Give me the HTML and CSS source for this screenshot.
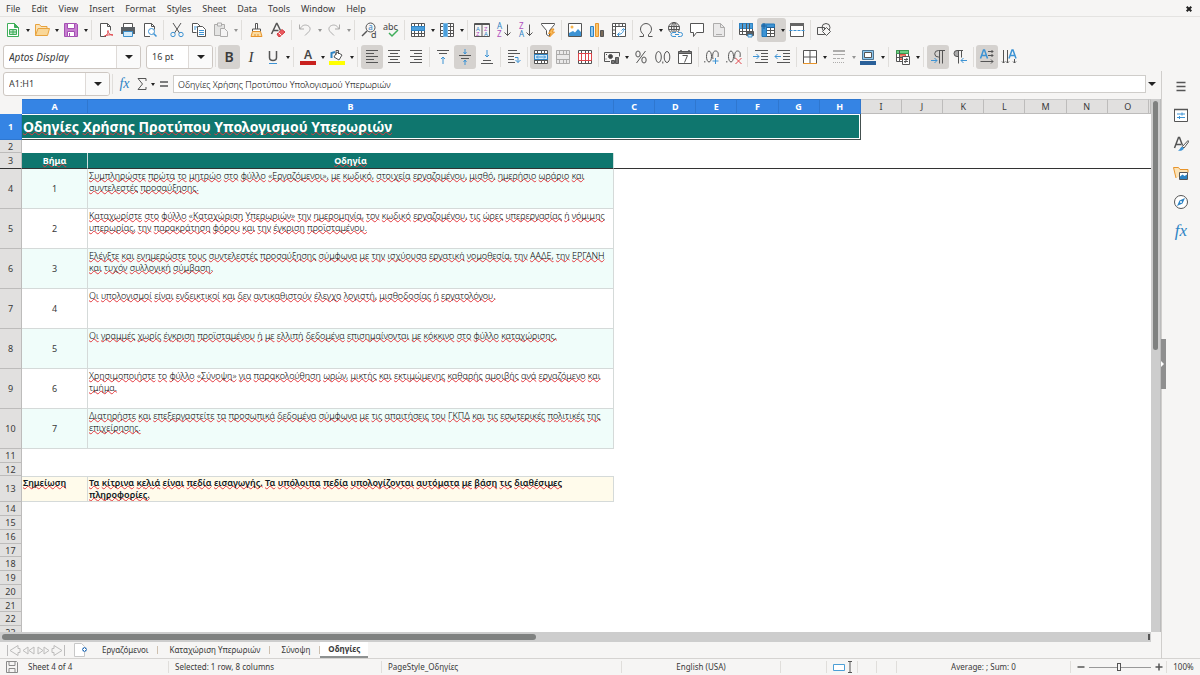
FILE: index.html
```html
<!DOCTYPE html>
<html lang="en">
<head>
<meta charset="utf-8">
<meta name="viewport" content="width=device-width, initial-scale=1">
<title>Spreadsheet</title>
<link rel="stylesheet" href="styles.css">
</head>
<body>
<div class="app">
  <nav class="menubar">
    <button>File</button><button>Edit</button><button>View</button><button>Insert</button><button>Format</button><button>Styles</button><button>Sheet</button><button>Data</button><button>Tools</button><button>Window</button><button>Help</button>
    <button class="close" aria-label="Close document"><svg viewBox="0 0 6 6"><path class="heavy" d="M.7.7l4.6 4.6M5.3.7L.7 5.3"/></svg></button>
  </nav>

  <div class="toolbar">
    <div class="split">
      <button class="tool" aria-label="New"><svg viewBox="0 0 16 16"><path class="green" d="M2.5 1.500h7l4 4v9h-11z" fill="#fff"/><path d="M9.500 1.500l4 4h-4z" fill="#3fae5a" stroke="#3fae5a"/><path class="green" d="M4.500 7.500h7v5h-7zM4.500 10h7M8 7.500v5" fill="#bfe5c8"/></svg></button>
      <button class="drop" aria-label="New options"></button>
    </div>
    <div class="split">
      <button class="tool" aria-label="Open"><svg viewBox="0 0 16 16"><path d="M1.500 13.500v-11h4l1.500 2h6v2" fill="#fbe3b8" stroke="#e8a33d"/><path d="M1.500 13.500l2.500-7h11.500l-2 7z" fill="#f9d798" stroke="#e8a33d"/></svg></button>
      <button class="drop" aria-label="Open options"></button>
    </div>
    <div class="split">
      <button class="tool" aria-label="Save"><svg viewBox="0 0 16 16"><path d="M1.500 1.500h12l1 1v12h-13z" fill="#c77fd0" stroke="#a44fb2"/><path d="M4.500 1.500h7v5h-7z" fill="#fff" stroke="#a44fb2"/><path d="M4.500 14.500v-5h7v5z" fill="#fff" stroke="#a44fb2"/><path d="M6.500 11v3" stroke="#a44fb2"/></svg></button>
      <button class="drop" aria-label="Save options"></button>
    </div>
    <span class="sep"></span>
    <button class="tool" aria-label="Export as PDF"><svg viewBox="0 0 16 16"><path d="M8 14.500H2.500v-13h7l3 3v4" fill="#fff"/><path d="M9.500 1.500v3h3"/><path class="red" d="M6.500 14c3-1 4-3 3.500-5.500-1 2 2 4.500 5 4.500-3-.5-6 0-8.500 1z"/></svg></button>
    <button class="tool" aria-label="Print"><svg viewBox="0 0 16 16"><path d="M3.500 5V1.500h9V5" fill="#fff"/><path d="M1 5h14v7H1z" fill="#5a5f63" stroke="none"/><path d="M3.500 9.500h9v5h-9z" fill="#d5ecfa" stroke="#3d8fca"/></svg></button>
    <button class="tool" aria-label="Print preview"><svg viewBox="0 0 16 16"><path d="M8 14.500H2.500v-13h7l3 3v3" fill="#fff"/><path d="M9.500 1.500v3h3"/><circle class="blue" cx="9.500" cy="9.500" r="3"/><path class="blue wide" d="M11.800 11.800l2.700 2.700"/></svg></button>
    <span class="sep"></span>
    <button class="tool" aria-label="Cut"><svg viewBox="0 0 16 16"><path d="M4 1l6.500 10M12 1L5.500 11"/><circle class="blue" cx="4" cy="12.500" r="2.200"/><circle class="blue" cx="12" cy="12.500" r="2.200"/></svg></button>
    <button class="tool" aria-label="Copy"><svg viewBox="0 0 16 16"><path d="M5.500 10.500h-4v-9h5l3 3v1" fill="#fff"/><path class="blue" d="M3 5h3M3 7h2"/><path d="M6.500 4.500h5l3 3v7h-8z" fill="#fff"/><path class="blue" d="M8 8.500h5M8 10.500h5M8 12.500h5"/></svg></button>
    <div class="split off">
      <button class="tool" aria-label="Paste"><svg viewBox="0 0 16 16"><path d="M1.500 2.500h10v11h-10z" fill="#d0d0d0"/><path d="M4.500 1h4v3h-4z" fill="#eee"/><path d="M7.500 6.500h4l3 3v5h-7z" fill="#f4f4f4"/></svg></button>
      <button class="drop" aria-label="Paste options"></button>
    </div>
    <span class="sep"></span>
    <button class="tool" aria-label="Clone formatting"><svg viewBox="0 0 16 16"><path d="M7.500 7V1.500h2V7M4.500 9.500V7h8v2.500z" fill="#fff"/><path d="M4.500 9.500h8l1.500 5H3z" fill="#fbdca2" stroke="#e8942a"/><path d="M7 14v-2M10 14v-2" stroke="#e8942a"/></svg></button>
    <button class="tool" aria-label="Clear formatting"><svg viewBox="0 0 16 16"><path class="wide" d="M1.500 12L6.500 1.500h.5l3.500 7M3.500 8.500h5"/><path d="M7 12l5-4.500 3 2.500-5 4.500H8.500z" fill="#ea5a5f" stroke="#d33a41"/><path d="M8.500 10.500l3 3" stroke="#fff"/></svg></button>
    <span class="sep"></span>
    <div class="split off">
      <button class="tool" aria-label="Undo"><svg viewBox="0 0 16 16"><path d="M2.500 2.500v4.500H7M3 7c2-4 5-4.500 7.500-3.500s3.500 3.500 1.500 6L8 13.500"/></svg></button>
      <button class="drop" aria-label="Undo list"></button>
    </div>
    <div class="split off">
      <button class="tool" aria-label="Redo"><svg viewBox="0 0 16 16"><path d="M13.500 2.500v4.500H9M13 7c-2-4-5-4.500-7.500-3.500S2 7 4 9.500L8 13.500"/></svg></button>
      <button class="drop" aria-label="Redo list"></button>
    </div>
    <span class="sep"></span>
    <button class="tool" aria-label="Find and replace"><svg viewBox="0 0 16 16"><circle cx="9.500" cy="5.500" r="4.500"/><path class="wide" d="M6 9L1 14"/><text class="glyph-blue" x="7.300" y="8" font-size="8">a</text><text class="glyph" x="10" y="15.500" font-size="9">d</text></svg></button>
    <button class="tool" aria-label="Spelling"><svg viewBox="0 0 16 16"><text class="glyph" x="0" y="7.500" font-size="9">abc</text><path d="M6 11l3 3 6-6" stroke="#3fae5a" stroke-width="1.500"/></svg></button>
    <span class="sep"></span>
    <div class="split">
      <button class="tool" aria-label="Row"><svg viewBox="0 0 16 16"><path d="M1.500 1.500h13v13h-13z" fill="#fff"/><path d="M1.500 11.500h13M4.500 1.500v13M8.500 1.500v13M11.500 1.500v13"/><path d="M1.500 4.500h13v4h-13z" fill="#4a9fdc" stroke="#2d83c4"/></svg></button>
      <button class="drop" aria-label="Row options"></button>
    </div>
    <div class="split">
      <button class="tool" aria-label="Column"><svg viewBox="0 0 16 16"><path d="M1.500 1.500h13v13h-13z" fill="#fff"/><path d="M1.500 4.500h13M1.500 8.500h13M1.500 11.500h13M11.500 1.500v13"/><path d="M4.500 1.500h4v13h-4z" fill="#4a9fdc" stroke="#7bbbe8"/></svg></button>
      <button class="drop" aria-label="Column options"></button>
    </div>
    <span class="sep"></span>
    <button class="tool" aria-label="Sort"><svg viewBox="0 0 16 16"><path d="M.5 1.500h15v13H.5zM8 2v12M.5 2.500h15"/><text class="glyph-blue" x="2" y="8.500" font-size="6">A</text><text class="glyph-purple" x="2" y="14" font-size="6">Z</text><text class="glyph-purple" x="10" y="8.500" font-size="6">Z</text><text class="glyph-blue" x="10" y="14" font-size="6">A</text></svg></button>
    <button class="tool" aria-label="Sort ascending"><svg viewBox="0 0 16 16"><text class="glyph-blue" x="1" y="7" font-size="8">A</text><text class="glyph-purple" x="1" y="15" font-size="8">Z</text><path d="M11.500 2.500v11M8.500 10.500l3 3 3-3"/></svg></button>
    <button class="tool" aria-label="Sort descending"><svg viewBox="0 0 16 16"><text class="glyph-purple" x="1" y="7" font-size="8">Z</text><text class="glyph-blue" x="1" y="15" font-size="8">A</text><path d="M11.500 2.500v11M8.500 10.500l3 3 3-3"/></svg></button>
    <button class="tool" aria-label="AutoFilter"><svg viewBox="0 0 16 16"><path d="M1.500 1.500h13v1l-5 6v6l-3-2v-4l-5-6z" fill="#fff"/><path d="M11.500 7l-3 4.500H11L9.500 15l5-5H12l2-3z" fill="#f9bd5c" stroke="#e8942a"/></svg></button>
    <span class="sep"></span>
    <button class="tool" aria-label="Insert image"><svg viewBox="0 0 16 16"><path d="M1.500 1.500h13v13h-13z" fill="#fff"/><path d="M2 14v-3l4-2 2 1.500 3-3.500 3 3V14z" fill="#3d93d4" stroke="none"/><circle cx="5" cy="5" r="1.500" fill="#f7b44c" stroke="none"/></svg></button>
    <button class="tool" aria-label="Insert chart"><svg viewBox="0 0 16 16"><path d="M1.500 4.500h3v10h-3z" fill="#8fc8f0" stroke="#2d83c4"/><path d="M6.500 1.500h3v13h-3z" fill="#f9c56c" stroke="#e8942a"/><path d="M11.500 8.500h3v6h-3z" fill="#7a6a58"/></svg></button>
    <button class="tool" aria-label="Pivot table"><svg viewBox="0 0 16 16"><path d="M1.500 1.500h13v13h-13z" fill="#fff"/><path d="M1.500 4.500h13M4.500 1.500v13M8 1.500v3M11.500 1.500v3M1.500 8h3M1.500 11.500h3"/><path class="blue" d="M6.500 12.500c4 0 6-2 6-5M10.500 8.500l2-2 2 2M8.500 10.500l-2 2 2 2"/></svg></button>
    <span class="sep"></span>
    <div class="split">
      <button class="tool" aria-label="Special character"><svg viewBox="0 0 16 16"><path d="M1.500 14.500h4v-2C3.500 11 2.500 9 2.500 7c0-3 2.500-5.500 5.500-5.500s5.500 2.500 5.500 5.500c0 2-1 4-3 5.500v2h4"/></svg></button>
      <button class="drop" aria-label="Special character options"></button>
    </div>
    <button class="tool" aria-label="Hyperlink"><svg viewBox="0 0 16 16"><circle cx="7" cy="6" r="5.500"/><ellipse cx="7" cy="6" rx="2.500" ry="5.500"/><path d="M1.500 4.500h11M1.500 7.500h11M7 .5v10"/><path d="M4 10h12v5H4z" fill="#f6f5f4" stroke="none"/><path class="blue" d="M9 10.500H6a2 2 0 0 0 0 4H9M11 10.500h2.500a2 2 0 0 1 0 4H11M8 12.500h4"/></svg></button>
    <button class="tool" aria-label="Comment"><svg viewBox="0 0 16 16"><path d="M1.500 1.500h13v9h-7l-3 4v-4h-3z" fill="#fff"/></svg></button>
    <button class="tool off" aria-label="Headers and footers"><svg viewBox="0 0 16 16"><path d="M2.500 1.500h7l4 4v9h-11z" fill="#dcdcdc"/><path d="M9.500 1.500v4h4M5 12.500h6"/></svg></button>
    <span class="sep"></span>
    <button class="tool" aria-label="Define print area"><svg viewBox="0 0 16 16"><path d="M1.500 1.500h13v11h-13z" fill="#fff"/><path d="M1.500 1.500h13v5h-13z" fill="#4a9fdc" stroke="#2d83c4"/><path d="M1.500 9.500h13M4.500 1.500v11M8.500 1.500v11M11.500 1.500v8"/><path d="M8.500 9.500h7v4h-7z" fill="#5a5f63"/><path d="M10 12.500h4v2.500h-4z" fill="#d5ecfa" stroke="#3d8fca"/></svg></button>
    <div class="split on">
      <button class="tool" aria-label="Freeze rows and columns" aria-pressed="true"><svg viewBox="0 0 16 16"><path d="M2.500 2.500h12v12h-12z" fill="#fff"/><path d="M6.500 8.500h8M6.500 11.500h8M10.500 6v8.500"/><path d="M2 2h12.500v3.500h-8v9H2z" fill="#3d93d4" stroke="#1f76b8"/><path d="M4 1v6M1 4h6M6.500 5.500h8" stroke="#1f5f98"/></svg></button>
      <button class="drop" aria-label="Freeze options"></button>
    </div>
    <button class="tool" aria-label="Split window"><svg viewBox="0 0 16 16"><path d="M1.500 1.500h13v13h-13z" fill="#fff"/><path d="M1 1h14v3H1z" fill="#666" stroke="none"/><path class="blue" d="M.5 8.500h15" stroke-dasharray="3 1"/></svg></button>
    <span class="sep"></span>
    <button class="tool" aria-label="Show draw functions"><svg viewBox="0 0 16 16"><path d="M1.500 5.500h7v7h-7z"/><circle cx="10" cy="5.500" r="4"/><path d="M10.500 5.500l4 4-4 4-4-4z" fill="#f6f5f4"/></svg></button>
  </div>

  <div class="toolbar second">
    <div class="combo font-name"><input type="text" value="Aptos Display" aria-label="Font name"><button aria-label="Font list"></button></div>
    <div class="combo font-size"><input type="text" value="16 pt" aria-label="Font size"><button aria-label="Size list"></button></div>
    <span class="sep"></span>
    <button class="tool on letter bold" aria-label="Bold" aria-pressed="true">B</button>
    <button class="tool letter italic" aria-label="Italic">I</button>
    <div class="split">
      <button class="tool letter" aria-label="Underline"><svg viewBox="0 0 16 16"><path class="wide" d="M4.500 2v6.500c0 2 1 3 3.500 3s3.500-1 3.500-3V2"/><path class="blue" d="M4 14.500h8"/></svg></button>
      <button class="drop" aria-label="Underline options"></button>
    </div>
    <span class="sep"></span>
    <div class="split">
      <button class="tool" aria-label="Font color"><svg viewBox="0 0 16 16"><text class="glyph strong" x="4" y="10" font-size="12">A</text><path d="M0 12h16v4H0z" fill="#c9211e" stroke="none"/></svg></button>
      <button class="drop" aria-label="Font color options"></button>
    </div>
    <div class="split">
      <button class="tool" aria-label="Background color"><svg viewBox="0 0 16 16"><path d="M8 3l5 3-3 5-5-3zM7 6V1.500h2.500V5" fill="#fff"/><path d="M2.500 9V4l3.500-1" stroke="#2d83c4" stroke-width="2"/><path d="M0 12h16v4H0z" fill="#ffff00" stroke="none"/></svg></button>
      <button class="drop" aria-label="Background color options"></button>
    </div>
    <span class="sep"></span>
    <button class="tool on" aria-label="Align left" aria-pressed="true"><svg viewBox="0 0 16 16"><path d="M2 1.500h12M2 4.500h8M2 7.500h12M2 10.500h8M2 13.500h12"/></svg></button>
    <button class="tool" aria-label="Align center"><svg viewBox="0 0 16 16"><path d="M2 1.500h12M4 4.500h8M2 7.500h12M4 10.500h8M2 13.500h12"/></svg></button>
    <button class="tool" aria-label="Align right"><svg viewBox="0 0 16 16"><path d="M2 1.500h12M6 4.500h8M2 7.500h12M6 10.500h8M2 13.500h12"/></svg></button>
    <span class="sep"></span>
    <button class="tool" aria-label="Align top"><svg viewBox="0 0 16 16"><path d="M2 1.500h12M4 4.500h8"/><path class="blue" d="M8 15V8M6 10l2-2 2 2"/></svg></button>
    <button class="tool on" aria-label="Center vertically" aria-pressed="true"><svg viewBox="0 0 16 16"><path d="M2 6.500h12M4 9.500h8"/><path class="blue" d="M8 0v5M6.500 3L8 5l1.500-2M8 16v-5M6.500 13L8 11l1.500 2"/></svg></button>
    <button class="tool" aria-label="Align bottom"><svg viewBox="0 0 16 16"><path d="M4 11.500h8M2 14.500h12"/><path class="blue" d="M8 1v7M6 6l2 2 2-2"/></svg></button>
    <span class="sep"></span>
    <button class="tool" aria-label="Wrap text"><svg viewBox="0 0 16 16"><path d="M2 1.500h9M2 4.500h12M2 7.500h6M2 10.500h6M2 13.500h7"/><path class="blue" d="M9 8.500h3v5M9.500 11l2.500 2.500 2.500-2.500"/></svg></button>
    <span class="sep"></span>
    <button class="tool on" aria-label="Merge and center" aria-pressed="true"><svg viewBox="0 0 16 16"><path d="M1.500 1.500h13v13h-13z" fill="#fff"/><path d="M1.500 4.500h13M1.500 11.500h13M4.500 1.500v3M8.500 1.500v3M11.500 1.500v3M4.500 11.500v3M8.500 11.500v3M11.500 11.500v3"/><path d="M1.500 5.500h13v5h-13z" fill="#cfe8fa" stroke="#2d83c4"/><path class="blue" d="M3.500 8h9M5 6.500L3.500 8 5 9.500M11 6.500L12.500 8 11 9.500"/></svg></button>
    <button class="tool off" aria-label="Merge cells"><svg viewBox="0 0 16 16"><path d="M1.500 1.500h13v13h-13z" fill="#dcdcdc"/><path d="M1.500 5.500h13M1.500 10.500h13M4.500 1.500v4M8.500 1.500v4M11.500 1.500v4M4.500 10.500v4M8.500 10.500v4M11.500 10.500v4"/></svg></button>
    <button class="tool" aria-label="Unmerge cells"><svg viewBox="0 0 16 16"><path d="M1.500 1.500h13v13h-13z" fill="#fff"/><path d="M4.500 1.500v3M8.500 1.500v3M11.500 1.500v3M4.500 12v3M8.500 12v3M11.500 12v3"/><path class="red" d="M1.500 4.500h13v7h-13zM4.500 4.500v7M8.500 4.500v7M11.500 4.500v7"/></svg></button>
    <span class="sep"></span>
    <div class="split">
      <button class="tool" aria-label="Currency format"><svg viewBox="0 0 16 16"><path d="M6 12.500H.5v-9h15v4"/><circle cx="6.500" cy="7.500" r="2" fill="#444"/><path d="M7.500 11.500h3v3h-3zM11.500 8.500h3v6h-3zM2 9.500v1M2 5.500h1" fill="#777"/></svg></button>
      <button class="drop" aria-label="Currency options"></button>
    </div>
    <button class="tool" aria-label="Percent format"><svg viewBox="0 0 16 16"><path d="M12.500 2l-9 12"/><ellipse cx="5" cy="5" rx="2.200" ry="3"/><ellipse cx="11" cy="11" rx="2.200" ry="3"/></svg></button>
    <button class="tool" aria-label="Number format"><svg viewBox="0 0 16 16"><ellipse cx="3.500" cy="8" rx="2.800" ry="5.500"/><ellipse cx="12" cy="8" rx="2.800" ry="5.500"/><path d="M7.800 12.500v2"/></svg></button>
    <button class="tool" aria-label="Date format"><svg viewBox="0 0 16 16"><path d="M1.500 2.500h13v12h-13zM1.500 4.500h13" fill="#fff"/><path class="wide" d="M4 1v2M12 1v2M1.500 3h13"/><path d="M5.500 6.500h5l-3 7"/></svg></button>
    <span class="sep"></span>
    <button class="tool" aria-label="Add decimal place"><svg viewBox="0 0 16 16"><path d="M.8 12v1.500"/><ellipse cx="5" cy="7.500" rx="2.500" ry="5.500"/><path d="M9 10c-.7-3-.5-8 2.500-8S14.500 5 14 8"/><path class="blue" d="M11.500 9v6M8.500 12h6"/></svg></button>
    <button class="tool" aria-label="Delete decimal place"><svg viewBox="0 0 16 16"><path d="M.8 12v1.500"/><ellipse cx="5" cy="7.500" rx="2.500" ry="5.500"/><path d="M9 10c-.7-3-.5-8 2.500-8S14.500 5 14 8"/><path class="red" d="M9.500 9l6 6M15.500 9l-6 6"/></svg></button>
    <span class="sep"></span>
    <button class="tool" aria-label="Increase indent"><svg viewBox="0 0 16 16"><path d="M2 1.500h13M8 4.500h7M8 7.500h7M8 10.500h7M2 13.500h13"/><path class="blue" d="M0 7.500h6M3.500 5L6 7.500 3.500 10"/></svg></button>
    <button class="tool" aria-label="Decrease indent"><svg viewBox="0 0 16 16"><path d="M2 1.500h13M8 4.500h7M8 7.500h7M8 10.500h7M2 13.500h13"/><path class="blue" d="M6 7.500H0M2.500 5L0 7.500 2.500 10"/></svg></button>
    <span class="sep"></span>
    <div class="split">
      <button class="tool" aria-label="Borders"><svg viewBox="0 0 16 16"><path d="M1.500 1.500h13v13h-13zM8 1.500v13M1.500 8h13" fill="#fff"/><path d="M1 14.500h14" stroke="#e8942a"/></svg></button>
      <button class="drop" aria-label="Border options"></button>
    </div>
    <div class="split off">
      <button class="tool" aria-label="Border style"><svg viewBox="0 0 16 16"><path d="M2 1.500h12M2 2.500h12M2 5.500h12"/><path d="M2 9.500h12" stroke-dasharray="3 1"/><path d="M2 13.500h12" stroke-dasharray="1 1"/></svg></button>
      <button class="drop" aria-label="Border style options"></button>
    </div>
    <div class="split">
      <button class="tool" aria-label="Border color"><svg viewBox="0 0 16 16"><path d="M2.500 1.500h11v9h-11z" fill="#8cc7ef" stroke="#4c7390"/><path d="M4.500 3.500h7v5h-7z" fill="#fff" stroke="#555"/><path d="M0 12h16v4H0z" fill="#2a6099" stroke="none"/></svg></button>
      <button class="drop" aria-label="Border color options"></button>
    </div>
    <span class="sep"></span>
    <div class="split">
      <button class="tool" aria-label="Conditional formatting"><svg viewBox="0 0 16 16"><path d="M1.500 1.500h12v11h-12z" fill="#fff"/><path d="M1.500 1.500h12v3h-12z" fill="#6fcf84" stroke="#3a9a50"/><path d="M4.500 5.500h6v5h-6z" fill="#f0866f" stroke="#d9534a"/><path d="M4.500 1.500v11M1.500 8.500h12"/><path d="M7.500 7.500h7v8h-7z" fill="#fff"/><path d="M9 10.500h4M9 12.500h4M12 9l-2 5"/></svg></button>
      <button class="drop" aria-label="Conditional options"></button>
    </div>
    <span class="sep"></span>
    <button class="tool on" aria-label="Left to right" aria-pressed="true"><svg viewBox="0 0 16 16"><path d="M15 1.500H8.500a3.500 3 0 0 0 0 6.500h1M9.500 1.500v13M12.500 1.500v13"/><path class="blue" d="M1 11.500h6M4.500 9L7 11.500 4.500 14"/></svg></button>
    <button class="tool" aria-label="Right to left"><svg viewBox="0 0 16 16"><path d="M11 1.500H5a3 3 0 0 0 0 6h1.500v-6" fill="#aaa"/><path d="M6.500 1.500v13M9.500 1.500v7"/><path class="blue" d="M15 11.500H9M11.500 9L9 11.500l2.500 2.500"/></svg></button>
    <span class="sep"></span>
    <button class="tool on" aria-label="Text direction left to right" aria-pressed="true"><svg viewBox="0 0 16 16"><path class="blue wide" d="M1.500 9.500l3-8.500h1l3 8.500M3 6.500h4"/><path d="M9 2.500h5M9 6.500h5M1.500 12.500H14M12.500 1l1.500 1.500L12.500 4M12.500 5l1.500 1.500L12.500 8M12 10.500l2 2-2 2"/></svg></button>
    <button class="tool" aria-label="Text direction top to bottom"><svg viewBox="0 0 16 16"><path class="blue wide" d="M8 9.500L11 1h1l3 8.500M9.500 6.500h4"/><path d="M2.500 1v13M6.500 1v13M13.500 10v4M1 12.500L2.500 14 4 12.500M5 12.500L6.500 14 8 12.500M12 12.500l1.500 1.500 1.500-1.500"/></svg></button>
  </div>

  <div class="workspace">
    <main class="document">
      <div class="formula-bar">
        <div class="combo name-box"><input type="text" value="A1:H1" aria-label="Name box"><button aria-label="Named ranges"></button></div>
        <span class="sep"></span>
        <button class="fx" aria-label="Function wizard">fx</button>
        <button class="mini" aria-label="Sum"><svg viewBox="0 0 12 16"><path d="M10 5V2.500H2L6.500 8 2 13.500h8V11"/></svg></button>
        <button class="drop" aria-label="Sum options"></button>
        <button class="mini" aria-label="Formula"><svg viewBox="0 0 12 16"><path class="wide" d="M2 6h8M2 10h8"/></svg></button>
        <input class="formula" type="text" value="Οδηγίες Χρήσης Προτύπου Υπολογισμού Υπερωριών" aria-label="Input line">
        <button class="expand" aria-label="Expand formula bar"></button>
      </div>

      <div class="grid-area">
        <div class="viewport">
          <table class="sheet">
            <colgroup><col class="c-head"><col class="c-a"><col class="c-b"><col><col><col><col><col><col><col><col><col><col><col><col><col><col class="c-rest"></colgroup>
            <thead>
              <tr><th class="corner"></th><th class="sel">A</th><th class="sel">B</th><th class="sel">C</th><th class="sel">D</th><th class="sel">E</th><th class="sel">F</th><th class="sel">G</th><th class="sel">H</th><th>I</th><th>J</th><th>K</th><th>L</th><th>M</th><th>N</th><th>O</th><th></th></tr>
            </thead>
            <tbody>
              <tr class="title-row"><th class="sel">1</th><td colspan="8" class="title"><span class="spell">Οδηγίες Χρήσης Προτύπου Υπολογισμού Υπερωριών</span></td></tr>
              <tr class="low"><th>2</th></tr>
              <tr class="head-row"><th>3</th><td class="head"><span class="spell">Βήμα</span></td><td class="head"><span class="spell">Οδηγία</span></td><td colspan="14"></td></tr>
              <tr class="step tint"><th>4</th><td class="num">1</td><td class="text"><span class="spell">Συμπληρώστε πρώτα το μητρώο στο φύλλο «Εργαζόμενοι», με κωδικό, στοιχεία εργαζομένου, μισθό, ημερήσιο ωράριο και<br>συντελεστές προσαύξησης.</span></td></tr>
              <tr class="step"><th>5</th><td class="num">2</td><td class="text"><span class="spell">Καταχωρίστε στο φύλλο «Καταχώριση Υπερωριών» την ημερομηνία, τον κωδικό εργαζομένου, τις ώρες υπερεργασίας ή νόμιμης<br>υπερωρίας, την παρακράτηση φόρου και την έγκριση προϊσταμένου.</span></td></tr>
              <tr class="step tint"><th>6</th><td class="num">3</td><td class="text"><span class="spell">Ελέγξτε και ενημερώστε τους συντελεστές προσαύξησης σύμφωνα με την ισχύουσα εργατική νομοθεσία, την ΑΑΔΕ, την ΕΡΓΑΝΗ<br>και τυχόν συλλογική σύμβαση.</span></td></tr>
              <tr class="step"><th>7</th><td class="num">4</td><td class="text"><span class="spell">Οι υπολογισμοί είναι ενδεικτικοί και δεν αντικαθιστούν έλεγχο λογιστή, μισθοδοσίας ή εργατολόγου.</span></td></tr>
              <tr class="step tint"><th>8</th><td class="num">5</td><td class="text"><span class="spell">Οι γραμμές χωρίς έγκριση προϊσταμένου ή με ελλιπή δεδομένα επισημαίνονται με κόκκινο στο φύλλο καταχώρισης.</span></td></tr>
              <tr class="step"><th>9</th><td class="num">6</td><td class="text"><span class="spell">Χρησιμοποιήστε το φύλλο «Σύνοψη» για παρακολούθηση ωρών, μικτής και εκτιμώμενης καθαρής αμοιβής ανά εργαζόμενο και<br>τμήμα.</span></td></tr>
              <tr class="step tint"><th>10</th><td class="num">7</td><td class="text"><span class="spell">Διατηρήστε και επεξεργαστείτε τα προσωπικά δεδομένα σύμφωνα με τις απαιτήσεις του ΓΚΠΔ και τις εσωτερικές πολιτικές της<br>επιχείρησης.</span></td></tr>
              <tr><th>11</th></tr>
              <tr class="low"><th>12</th></tr>
              <tr class="note"><th>13</th><td><span class="spell">Σημείωση</span></td><td><span class="spell">Τα κίτρινα κελιά είναι πεδία εισαγωγής. Τα υπόλοιπα πεδία υπολογίζονται αυτόματα με βάση τις διαθέσιμες<br>πληροφορίες.</span></td></tr>
              <tr><th>14</th></tr>
              <tr><th>15</th></tr>
              <tr><th>16</th></tr>
              <tr class="low"><th>17</th></tr>
              <tr><th>18</th></tr>
              <tr><th>19</th></tr>
              <tr><th>20</th></tr>
              <tr class="low"><th>21</th></tr>
              <tr><th>22</th></tr>
              <tr><th>23</th></tr>
            </tbody>
          </table>
        </div>
        <div class="vscroll"><div class="thumb"></div></div>
      </div>

      <div class="hscroll"><div class="thumb"></div><div class="grip"></div></div>

      <div class="tabs">
        <div class="tab-nav">
          <button aria-label="First sheet"><svg viewBox="0 0 15 13"><path d="M1.500 1v11M12 1.500L4 6.500l8 5V8.500h2v-4h-2z"/></svg></button>
          <button aria-label="Previous sheet"><svg viewBox="0 0 15 13"><path d="M7 3L2 6.500 7 10zM13 3L8 6.500l5 3.500z"/></svg></button>
          <button aria-label="Next sheet"><svg viewBox="0 0 15 13"><path d="M2 3l5 3.500L2 10zM8 3l5 3.500L8 10z"/></svg></button>
          <button aria-label="Last sheet"><svg viewBox="0 0 15 13"><path d="M13.500 1v11M3 1.500l8 5-8 5V8.500H1v-4h2z"/></svg></button>
        </div>
        <button class="add-sheet" aria-label="Add sheet"><svg viewBox="0 0 14 14"><path d="M.5.5h7l3 3v10H.5z" fill="#fff" stroke="#c8c8c8"/><circle cx="10.500" cy="6.500" r="2.300" fill="#2a6fb8" stroke="none"/><path d="M9 6.500h3M10.500 5v3" stroke="#fff"/></svg></button>
        <button class="tab">Εργαζόμενοι</button>
        <button class="tab">Καταχώριση Υπερωριών</button>
        <button class="tab">Σύνοψη</button>
        <button class="tab current">Οδηγίες</button>
      </div>
    </main>

    <aside class="sidebar">
      <button class="handle" aria-label="Hide sidebar"></button>
      <button class="tool" aria-label="Sidebar settings"><svg viewBox="0 0 16 16"><path class="wide" d="M3.500 4.500h9M3.500 8.500h9M3.500 12.500h9"/></svg></button>
      <button class="tool" aria-label="Properties"><svg viewBox="0 0 16 16"><path d="M1.500 2.500h13v12h-13z" fill="#fff"/><path class="wide" d="M1 2.500h14"/><path class="blue" d="M4 7h8M4 10.500h8M9 5.500v3M6.500 9v3"/></svg></button>
      <button class="tool" aria-label="Styles"><svg viewBox="0 0 16 16"><path class="wide" d="M1.500 12L5.500 1.500h1l3 8M3 8.500h5"/><path d="M15 4.500l-5.500 6 1.500 1.500L15.500 6z" fill="#fff"/><path d="M9 10.500l2 2c-1.500 2.500-4 2.500-6 2 2-.5 2-3 4-4z" fill="#3d93d4" stroke="none"/></svg></button>
      <button class="tool" aria-label="Gallery"><svg viewBox="0 0 16 16"><path d="M3 13L.5 2.500h5l1.500 2h8v3" fill="#fbe3b8" stroke="#e8942a"/><path d="M6.500 7.500h8v7h-8z" fill="#fff"/><path d="M7 14v-2.500l2.500-2 2 1.500 2.500-1.500V14z" fill="#2d83c4" stroke="none"/></svg></button>
      <button class="tool" aria-label="Navigator"><svg viewBox="0 0 16 16"><circle cx="8" cy="8" r="6.500" fill="#fff"/><path d="M12 4l-2.500 5.500L4 12l2.500-5.500z" fill="#2d83c4" stroke="none"/><circle cx="8" cy="8" r="1" fill="#fff" stroke="none"/></svg></button>
      <button class="tool fx-large" aria-label="Functions">fx</button>
    </aside>
  </div>

  <footer class="statusbar">
    <span class="icon-cell"><svg viewBox="0 0 12 12"><path d="M.5.5h10l1 1v10H.5zM3 .5v4h6v-4M3 11.500v-4h6v4" stroke="#8a8a8a"/></svg></span>
    <span>Sheet 4 of 4</span>
    <span>Selected: 1 row, 8 columns</span>
    <span>PageStyle_Οδηγίες</span>
    <span class="mid">English (USA)</span>
    <span></span>
    <span class="mode"><svg viewBox="0 0 20 12"><path d="M.5 3.500h11v6H.5z" stroke="#4c9fd6" fill="#fff"/><path d="M15 .5h4M15 11.500h4M17 .5v11"/></svg></span>
    <span></span>
    <span></span>
    <span class="mid">Average: ; Sum: 0</span>
    <span class="zoom"><button aria-label="Zoom out"><svg viewBox="0 0 8 8"><path class="wide" d="M.5 4h7"/></svg></button><input type="range" min="0" max="100" value="48" aria-label="Zoom"><button aria-label="Zoom in"><svg viewBox="0 0 8 8"><path class="wide" d="M.5 4h7M4 .5v7"/></svg></button></span>
    <span class="mid">100%</span>
  </footer>
</div>
<script src="spelling.js"></script>
</body>
</html>
```

FILE: spelling.js
```js
// Marks each word of a cell on its own, so the wavy line stops at spaces.
document.querySelectorAll(".spell").forEach(function (cell) {
  Array.from(cell.childNodes).forEach(function (node) {
    if (node.nodeType !== Node.TEXT_NODE) return;
    var parts = document.createDocumentFragment();
    node.textContent.split(/(\s+)/).forEach(function (piece) {
      if (piece.trim() === "") {
        parts.appendChild(document.createTextNode(piece));
        return;
      }
      var word = document.createElement("span");
      word.className = "word";
      word.textContent = piece;
      parts.appendChild(word);
    });
    cell.replaceChild(parts, node);
  });
});
```

FILE: styles.css
```css
* { box-sizing: border-box; }

body {
  margin: 0;
  background: #f6f5f4;
  color: #3a3a3a;
  font: 9px/12px "Noto Sans", "Open Sans", sans-serif;
}

button, input {
  margin: 0;
  padding: 0;
  border: 0;
  background: none;
  color: inherit;
  font: inherit;
}

svg {
  display: block;
  fill: none;
  stroke: #555;
  stroke-width: 1;
  overflow: visible;
}
svg .blue { stroke: #3d93d4; }
svg .red { stroke: #e0444a; }
svg .green { stroke: #3fae5a; }
svg .wide { stroke-width: 1.5; }
svg .heavy { stroke: #222; stroke-width: 2; }
svg text { stroke: none; font-family: "Noto Sans", sans-serif; }
svg .glyph { fill: #444; }
svg .glyph-blue { fill: #2d83c4; }
svg .glyph-purple { fill: #b04fbd; }
svg .strong { font-weight: 600; }

.app {
  display: flex;
  flex-direction: column;
  height: 100vh;
  overflow: hidden;
}

/* Menu bar */
.menubar {
  display: flex;
  align-items: center;
  gap: 11px;
  height: 17px;
  padding: 1px 8px 0 6px;
  border-bottom: 1px solid #e4e3e1;
}
.menubar .close { margin-left: auto; }
.close svg { width: 6px; height: 6px; }

/* Toolbars */
.toolbar {
  display: flex;
  align-items: center;
  height: 26px;
  padding-left: 2px;
}
.toolbar.second { height: 28px; }
.tool {
  display: flex;
  align-items: center;
  justify-content: center;
  flex: none;
  width: 22px;
  height: 24px;
  border-radius: 3px;
}
.tool svg { width: 16px; height: 16px; }
.split { display: flex; flex: none; border-radius: 3px; }
.split + .sep { margin-right: 3px; }
.on { background: #d5d2cf; }
.off { opacity: 0.45; }
.drop {
  display: flex;
  align-items: center;
  justify-content: center;
  flex: none;
  width: 7px;
  height: 24px;
}
.drop::before, .expand::before, .combo button::before {
  content: "";
  border: 3px solid transparent;
  border-top-color: #222;
  border-bottom: 0;
}
.drop::before { border-width: 3px 2px 0; }
.sep {
  flex: none;
  width: 1px;
  height: 20px;
  margin: 0 2px;
  background: #e0dedb;
}
.letter { font-size: 14px; }
.bold { font-weight: 600; }
.italic { font-family: "Liberation Serif", serif; font-style: italic; font-size: 15px; }

.combo {
  display: flex;
  flex: none;
  height: 24px;
  border: 1px solid #cdc7c2;
  border-radius: 3px;
  background: #fff;
  overflow: hidden;
}
.combo input { flex: 1; min-width: 0; padding-left: 5px; }
.combo button {
  display: flex;
  align-items: center;
  justify-content: center;
  width: 24px;
  border-left: 1px solid #dedad7;
  background: #fafafa;
}
.combo button::before { border-width: 4px 4px 0; }
.font-name { width: 138px; margin: 0 5px 0 1px; font-size: 10px; font-style: italic; }
.font-size { width: 67px; }
.name-box { width: 107px; }

/* Formula bar */
.workspace { display: flex; flex: 1; min-height: 0; }
.document { display: flex; flex-direction: column; flex: 1; min-width: 0; }
.formula-bar {
  display: flex;
  align-items: center;
  height: 28px;
  padding: 0 3px 2px;
}
.fx {
  width: 19px;
  color: #2d83c4;
  font: italic 14px/20px "Liberation Serif", serif;
}
.mini svg { width: 12px; height: 16px; }
.mini { width: 15px; padding-left: 2px; }
.formula {
  flex: 1;
  min-width: 0;
  height: 18px;
  margin-left: 2px;
  padding-left: 4px;
  border: 1px solid #cfcdca;
  background: #fff;
  color: #000;
  font-weight: 300;
}
.expand { display: flex; justify-content: center; width: 12px; }
.expand::before { border-width: 4px 4px 0; }

/* Sheet */
.grid-area { display: flex; flex: 1; min-height: 0; }
.viewport {
  flex: 1;
  min-width: 0;
  overflow: hidden;
  background: #fff;
}
.sheet {
  width: 100%;
  table-layout: fixed;
  border-spacing: 0;
}
.c-head { width: 22px; }
.c-a { width: 66px; }
.c-b { width: 526px; }
.c-rest { width: 2px; }
.sheet th, .sheet td { padding: 0; overflow: hidden; white-space: nowrap; }
.sheet th {
  border-right: 1px solid #bdbcbb;
  border-bottom: 1px solid #bdbcbb;
  background: #e1e0df;
  font-weight: 400;
  line-height: 11px;
}
.sheet thead th { height: 15px; border-top: 1px solid #c9c9c9; }
.sheet thead .corner { background: #f6f5f4; border-color: #f6f5f4; }
.sheet tbody tr { height: 14px; }
.sheet tbody .low { height: 13px; }
.sheet th.sel {
  border-color: #2f77cf;
  background: #3584e4;
  color: #fff;
  font-weight: 700;
}
.sheet .title-row { height: 26px; }
.sheet .title {
  padding-left: 1px;
  border: solid #44504f;
  border-width: 0 1px 1px 0;
  box-shadow: inset 0 1px #fff, inset -1px -1px #fff;
  background: #0f766e;
  color: #fff;
  font-size: 14px;
  font-weight: 700;
  line-height: 20px;
}
.sheet .head-row { height: 16px; }
.sheet .head-row > * { border-bottom: 1px solid #333; }
.sheet .head {
  border-right: 1px solid #cfe0de;
  background: #0f766e;
  color: #fff;
  font-weight: 700;
  text-align: center;
  line-height: 13px;
}
.sheet .step { height: 40px; }
.step td, .note td {
  border-right: 1px solid #d5dad9;
  border-bottom: 1px solid #d5dad9;
}
.tint td { background: #f0fdfa; }
.num { text-align: center; }
.sheet .text {
  padding: 1px 0 0 1px;
  color: #000;
  font-weight: 300;
  vertical-align: top;
}
.sheet .note { height: 26px; }
.sheet .note td {
  padding-left: 1px;
  border-top: 1px solid #d5dad9;
  background: #fffbeb;
  color: #111820;
  font-weight: 600;
  vertical-align: top;
}
.word {
  text-decoration: underline wavy #e5393f 1px;
  text-decoration-skip-ink: none;
  text-underline-offset: -1px;
}

/* Scroll bars */
.vscroll {
  width: 10px;
  padding: 2px;
  border-right: 1px solid #bbb;
  background: #cdcdcd;
}
.thumb { border-radius: 3px; background: #7f8180; }
.vscroll .thumb { height: 47%; }
.hscroll {
  display: flex;
  justify-content: space-between;
  height: 10px;
  margin-right: 10px;
  padding: 2px 1px 2px 2px;
  background: #cdcdcd;
}
.hscroll .thumb { width: 46.500%; }
.grip { width: 2px; background: #555; }

/* Sheet tabs */
.tabs {
  display: flex;
  height: 17px;
  border-bottom: 1px solid #d5d3d1;
  font-size: 8px;
}
.tab-nav { display: flex; align-items: center; padding-left: 6px; opacity: 0.35; }
.tab-nav svg { width: 15px; height: 13px; }
.add-sheet { width: 14px; margin: 0 3px 0 8px; }
.add-sheet svg { width: 14px; height: 14px; }
.tab { position: relative; padding: 0 10px 0 11px; }
.tab::after {
  content: "";
  position: absolute;
  top: 4px;
  right: 0;
  width: 1px;
  height: 8px;
  background: #cdbfae;
}
.tab.current {
  padding: 0 8px;
  border-bottom: 2px solid #8e9191;
  background: #fff;
  font-weight: 700;
}
.tab.current::after { display: none; }

/* Sidebar */
.sidebar {
  position: relative;
  display: flex;
  flex-direction: column;
  align-items: center;
  gap: 5px;
  width: 39px;
  padding-top: 3px;
  border-left: 1px solid #d0cecc;
  border-bottom: 1px solid #d5d3d1;
}
.handle {
  position: absolute;
  left: -1px;
  top: calc(50% - 26px);
  display: flex;
  align-items: center;
  width: 5px;
  height: 50px;
  background: #8f8f8f;
}
.handle::before {
  content: "";
  border: 3px solid transparent;
  border-left-color: #fff;
  border-right: 0;
}
.fx-large { color: #2d83c4; font: italic 17px/24px "Liberation Serif", serif; }

/* Status bar */
.statusbar {
  display: grid;
  grid-template-columns: 22px 147fr 213fr 240fr 159fr 46px 31px 19px 20px 174fr 96px 33px;
  align-items: center;
  height: 16px;
  font-size: 8px;
}
.statusbar > span {
  display: flex;
  align-items: center;
  height: 12px;
  padding-left: 6px;
  border-right: 1px solid #e0dedb;
  white-space: nowrap;
}
.statusbar .icon-cell { border-right: 0; }
.statusbar .mid { justify-content: center; padding: 0; }
.statusbar > span:last-child { border-right: 0; }
.icon-cell svg { width: 12px; height: 12px; }
.mode svg { width: 20px; height: 12px; }
.statusbar .zoom { gap: 4px; padding-right: 3px; }
.zoom svg { width: 8px; height: 8px; }
.zoom input {
  flex: 1;
  min-width: 0;
  height: 8px;
  appearance: none;
  background: linear-gradient(#999, #999) center / 100% 1px no-repeat;
}
.zoom input::-webkit-slider-thumb {
  width: 4px;
  height: 8px;
  appearance: none;
  border: 1px solid #555;
  background: #f6f5f4;
}
```
